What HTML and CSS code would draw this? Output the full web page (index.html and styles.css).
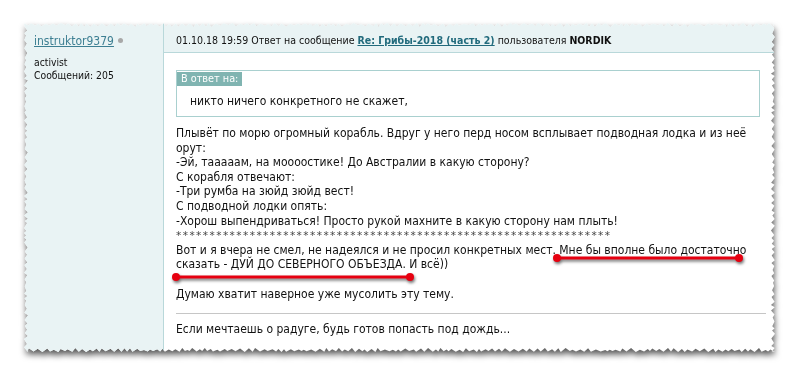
FILE: index.html
```html
<!DOCTYPE html>
<html>
  <head>
  <meta charset="UTF-8">
  <title>Форум</title>
  <link rel="stylesheet" href="styles.css">
  </head>
  <body>
    <div class="shot">
      <div class="sheet-wrap">
        <div class="sheet" id="sheet">
          <div class="author">
            <div class="nick"><a href="#">instruktor9379</a> <span class="status"></span></div>
            <div class="rank">activist</div>
            <div class="count">Сообщений: 205</div>
          </div>
          <div class="main">
            <div class="post-head">
              01.10.18 19:59 Ответ на сообщение <a href="#" class="topic">Re: Грибы-2018 (часть 2)</a> пользователя <b>NORDIK</b>
            </div>
            <div class="post-body">
              <div class="quote">
                <span class="quote-label">В ответ на:</span>
                <div class="quote-text">никто ничего конкретного не скажет,</div>
              </div>
              <div class="message">
                Плывёт по морю огромный корабль. Вдруг у него перд носом всплывает подводная лодка и из неё орут:<br>
                -Эй, тааааам, на моооостике! До Австралии в какую сторону?<br>
                С корабля отвечают:<br>
                -Три румба на зюйд зюйд вест!<br>
                С подводной лодки опять:<br>
                -Хорош выпендриваться! Просто рукой махните в какую сторону нам плыть!<br>
                <span class="stars">*****************************************************************</span><br>
                Вот и я вчера не смел, не надеялся и не просил конкретных мест. Мне бы вполне было достаточно сказать - ДУЙ ДО СЕВЕРНОГО ОБЪЕЗДА. И всё))<br>
                <br>
                Думаю хватит наверное уже мусолить эту тему.
              </div>
              <div class="signature">Если мечтаешь о радуге, будь готов попасть под дождь...</div>
            </div>
          </div>
        </div>
      </div>
      <svg class="marks" width="800" height="377" viewBox="0 0 800 377">
        <g stroke="#e60010" stroke-width="3" stroke-linecap="round" fill="#e60010">
          <line x1="557" y1="258" x2="739" y2="258"/>
          <circle cx="557" cy="258" r="4" stroke="none"/>
          <circle cx="739" cy="258" r="4" stroke="none"/>
          <line x1="176" y1="277" x2="410" y2="277"/>
          <circle cx="176" cy="277" r="4" stroke="none"/>
          <circle cx="410" cy="277" r="4" stroke="none"/>
        </g>
      </svg>
    </div>
    <script>
      function tearEdges(el) {
        var w = el.offsetWidth, h = el.offsetHeight;
        var seed = 11, pts = [], i = 0, x, y;
        function rnd() {
          seed = (seed * 9301 + 49297) % 233280;
          return seed / 233280;
        }
        function depth() {
          i++;
          return i % 2 ? rnd() * 1 : 2 + rnd() * 2;
        }
        for (x = 0; x < w; x += 2 + rnd() * 3) pts.push([x, depth()]);
        for (y = 0; y < h; y += 2 + rnd() * 3) pts.push([w - depth(), y]);
        for (x = w; x > 0; x -= 2 + rnd() * 3) pts.push([x, h - depth()]);
        for (y = h; y > 0; y -= 2 + rnd() * 3) pts.push([depth(), y]);
        el.style.clipPath = 'polygon(' + pts.map(function (p) {
          return p[0].toFixed(1) + 'px ' + p[1].toFixed(1) + 'px';
        }).join(', ') + ')';
      }
      tearEdges(document.getElementById('sheet'));
    </script>
  </body>
</html>
```

FILE: styles.css
```css
body {
    margin: 0;
    background: #fff;
    font: 12px "DejaVu Sans Condensed", "DejaVu Sans", Verdana, sans-serif;
    color: #111;
}

.shot {
    position: relative;
    width: 800px;
    height: 377px;
    overflow: hidden;
}

.sheet-wrap {
    padding: 23px 0 0 24px;
    filter: drop-shadow(1px 4px 3px rgba(0, 0, 0, .65));
}

.sheet {
    display: flex;
    width: 751px;
    height: 329px;
    background: #fff;
}

.author {
    width: 129px;
    padding: 10px 0 0 10px;
    background: #e9f3f4;
    border-right: 1px solid #b9d8da;
    font-size: 10.3px;
    line-height: 14px;
}

.nick {
    font-size: 12px;
    line-height: 16px;
    margin-bottom: 6px;
}

.nick a {
    color: #3d7f92;
}

.status {
    display: inline-block;
    width: 5px;
    height: 5px;
    border-radius: 50%;
    background: #a8a8a8;
    vertical-align: 2px;
    margin-left: 1px;
}

.count {
    margin-top: -1px;
}

.main {
    flex: 1;
    display: flex;
    flex-direction: column;
}

.post-head {
    height: 19px;
    padding: 10px 0 0 12px;
    background: #e9f3f4;
    border-bottom: 1px solid #b9d8da;
    font-size: 10.5px;
    line-height: 15px;
}

.topic {
    color: #216a7c;
    font-weight: bold;
}

.post-body {
    padding: 17px 15px 0 12px;
}

.quote {
    border: 1px solid #a9d0cf;
    padding-bottom: 7px;
}

.quote-label {
    display: inline-block;
    background: #80b4b1;
    color: #fff;
    padding: 0 4px;
    font-size: 10.8px;
    line-height: 14px;
}

.quote-text {
    margin-top: 8px;
    padding-left: 13px;
    line-height: 15px;
}

.message {
    margin-top: 9px;
    line-height: 14.6px;
}

.stars {
    font: 10.5px "DejaVu Sans", sans-serif;
    letter-spacing: 1.45px;
    color: #444;
}

.signature {
    margin: 12px -6px 0 0;
    padding-top: 8px;
    border-top: 1px solid #c6c6c6;
    line-height: 15px;
}

.marks {
    position: absolute;
    left: 0;
    top: 0;
    filter: drop-shadow(1px 2px 1.5px rgba(0, 0, 0, .55));
}
```
